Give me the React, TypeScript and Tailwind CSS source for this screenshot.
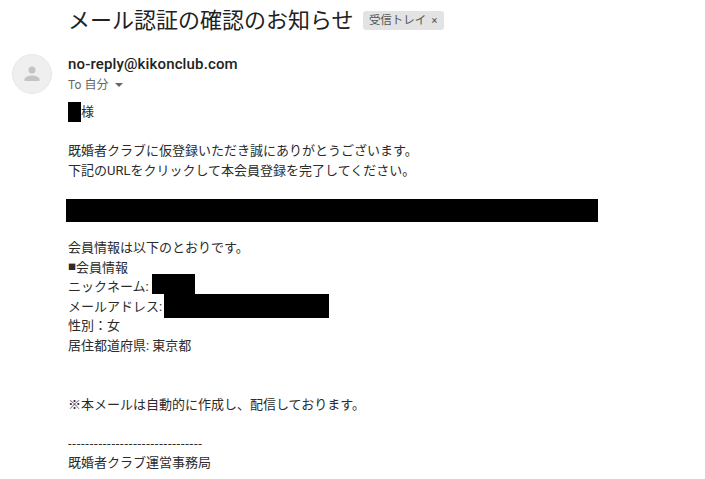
const jp = "font-['Roboto','Noto_Sans_CJK_JP',sans-serif]";

function Avatar() {
  return (
    <div className="w-10 h-10 mt-[1px] rounded-full bg-[#efefef] border border-[#e8e8e8] flex items-center justify-center shrink-0">
      <svg width="18" height="18" viewBox="0 0 18 18" fill="#c4c4c4">
        <circle cx="9" cy="5" r="3.6" />
        <path d="M1.5 16v-1.6C1.5 11.6 6 10.4 9 10.4s7.500 1.200 7.500 4V16z" />
      </svg>
    </div>
  );
}

function Redact({ className }: { className: string }) {
  return <span className={`inline-block bg-black align-middle ${className}`} />;
}

export default function App() {
  return (
    <div className={`w-[705px] h-[479px] overflow-hidden bg-white text-[#2b2b2b] ${jp}`}>
      <div className="flex items-center pl-[68px] pt-[3px] h-[38px]">
        <h1 className="text-[22px] leading-[34px] font-normal text-[#222]">メール認証の確認のお知らせ</h1>
        <span className="ml-[9px] h-[19px] w-[81px] flex items-center justify-center gap-[5px] rounded-[3px] bg-[#e2e3e2] text-[11.500px] text-[#555]">
          受信トレイ
          <span className="text-[11px] leading-none">×</span>
        </span>
      </div>

      <div className="flex pl-3 pt-[15px]">
        <Avatar />
        <div className="ml-4 pt-[1px]">
          <div className="text-[15px] leading-5 font-medium tracking-[0.15px] text-[#222]">no-reply@kikonclub.com</div>
          <div className="flex items-center mt-[1px] text-[12px] leading-5 text-[#666]">
            To 自分
            <svg className="ml-[7px]" width="8" height="4" viewBox="0 0 8 4" fill="#666">
              <path d="M0 0h8L4 4z" />
            </svg>
          </div>
        </div>
      </div>

      <div className="pl-[68px] text-[13px] leading-[19.500px]">
        <div className="flex items-center h-5 mt-[7px]">
          <Redact className="w-[13px] h-[20px]" />
          <span>様</span>
        </div>
        <p className="mt-[19px]">既婚者クラブに仮登録いただき誠にありがとうございます。</p>
        <p>下記のURLをクリックして本会員登録を完了してください。</p>
        <div className="mt-[19px] -ml-[2px] w-[532px] h-[23px] bg-black" />
        <p className="mt-[16px]">会員情報は以下のとおりです。</p>
        <p className="flex items-center">
          <span className="text-[8px] w-2">■</span>会員情報
        </p>
        <div className="flex items-center h-[19.500px]">
          <span>ニックネーム:</span>
          <Redact className="ml-[3px] mb-[6px] w-[43px] h-5" />
        </div>
        <div className="flex items-center h-[19.500px]">
          <span>メールアドレス:</span>
          <Redact className="ml-[2px] w-[165px] h-[24px]" />
        </div>
        <p>性別：女</p>
        <p>居住都道府県: 東京都</p>
        <p className="mt-[39.500px]">※本メールは自動的に作成し、配信しております。</p>
        <p className="mt-[19.500px] tracking-[0.75px]">-------------------------------</p>
        <p>既婚者クラブ運営事務局</p>
      </div>
    </div>
  );
}
